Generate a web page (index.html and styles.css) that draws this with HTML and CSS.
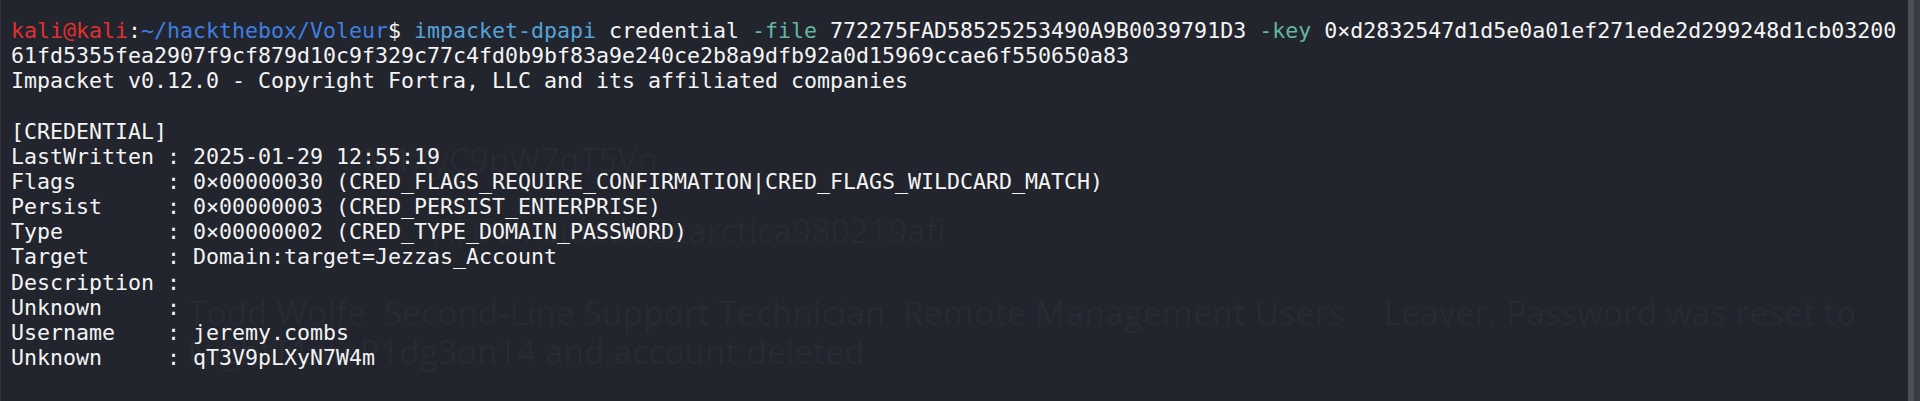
FILE: index.html
```html
<!DOCTYPE html>
<html lang="en">
<head>
<meta charset="utf-8">
<title>Terminal - impacket-dpapi</title>
<link rel="stylesheet" href="styles.css">
</head>
<body>
<div class="window">
  <div class="terminal">
    <div class="ghost" aria-hidden="true">
      <div class="ghost-line g1">M1XyC9pW7qT5Vn</div>
      <div class="ghost-line g2">AFireInsidedeOzarctica980219afi</div>
      <div class="ghost-line g3a">Todd Wolfe</div>
      <div class="ghost-line g3b">Second-Line Support Technician</div>
      <div class="ghost-line g3c">Remote Management Users</div>
      <div class="ghost-line g3d">Leaver. Password was reset to</div>
      <div class="ghost-line g4">NightT1meP1dg3on14 and account deleted</div>
    </div>
    <pre class="output"><span class="user">kali@kali</span>:<span class="path">~/hackthebox/Voleur</span>$ <span class="cmd">impacket-dpapi</span> credential <span class="opt">-file</span> 772275FAD58525253490A9B0039791D3 <span class="opt">-key</span> 0×d2832547d1d5e0a01ef271ede2d299248d1cb03200
61fd5355fea2907f9cf879d10c9f329c77c4fd0b9bf83a9e240ce2b8a9dfb92a0d15969ccae6f550650a83
Impacket v0.12.0 - Copyright Fortra, LLC and its affiliated companies

[CREDENTIAL]
LastWritten : 2025-01-29 12:55:19
Flags       : 0×00000030 (CRED_FLAGS_REQUIRE_CONFIRMATION|CRED_FLAGS_WILDCARD_MATCH)
Persist     : 0×00000003 (CRED_PERSIST_ENTERPRISE)
Type        : 0×00000002 (CRED_TYPE_DOMAIN_PASSWORD)
Target      : Domain:target=Jezzas_Account
Description : 
Unknown     : 
Username    : jeremy.combs
Unknown     : qT3V9pLXyN7W4m</pre>
  </div>
  <div class="scrollbar"><div class="thumb"></div></div>
</div>
</body>
</html>
```

FILE: styles.css
```css
html, body {
  margin: 0;
  padding: 0;
  height: 100%;
  background: #22252d;
  overflow: hidden;
}

.window {
  display: flex;
  height: 100%;
  border-left: 1px solid #2f323a;
  box-sizing: border-box;
}

.terminal {
  position: relative;
  flex: 1;
  min-width: 0;
  overflow: hidden;
}

.output {
  position: relative;
  margin: 0;
  padding: 18px 0 0 10px;
  font-family: "DejaVu Sans Mono", "Liberation Mono", monospace;
  font-size: 21.6px;
  line-height: 25.15px;
  color: #f4f4f4;
  white-space: pre;
}

.user { color: #e0302f; }
.path { color: #3f7fe0; }
.cmd  { color: #55a3d9; }
.opt  { color: #64b6a1; }

.ghost {
  position: absolute;
  inset: 0;
  font-family: "Open Sans", "Noto Sans", sans-serif;
  font-size: 33px;
  color: rgba(255, 255, 255, 0.035);
  pointer-events: none;
}

.ghost-line {
  position: absolute;
  white-space: pre;
  line-height: 32px;
  letter-spacing: 0.3px;
}

.g1  { top: 144px; right: 1250px; }
.g2  { top: 215px; right: 962px; }
.g3a { top: 297px; left: 187px; }
.g3b { top: 297px; left: 383px; }
.g3c { top: 297px; left: 902px; letter-spacing: 0.6px; }
.g3d { top: 297px; left: 1383px; }
.g4  { top: 336px; left: 187px; }

.scrollbar {
  width: 12px;
  flex: none;
  display: flex;
  background: #393c44;
}

.thumb {
  width: 6px;
  background: #4b4f57;
}
```
